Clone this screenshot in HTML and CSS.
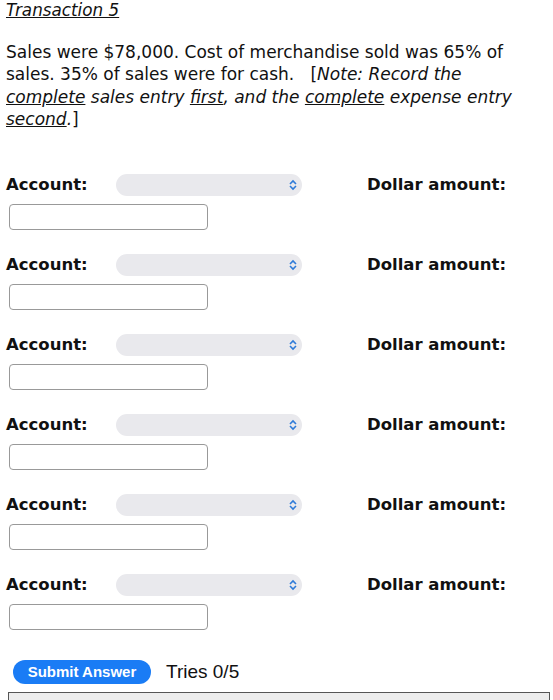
FILE: index.html
```html
<!DOCTYPE html>
<html lang="en">
<head>
    <meta charset="UTF-8">
    <meta name="viewport" content="width=device-width, initial-scale=1.0">
    <title>Transaction 5</title>
    <link rel="stylesheet" href="styles.css">
</head>
<body>
    <div class="question">
        <div class="title">Transaction 5</div>
        <p class="prompt">
            Sales were $78,000. Cost of merchandise sold was 65% of sales. 35% of sales were for cash. &nbsp;&nbsp;[<i>Note: Record the <u>complete</u> sales entry <u>first</u>, and the <u>complete</u> expense entry <u>second</u>.</i>]
        </p>

        <div class="entries">
            <div class="entry">
                <div class="line">
                    <span class="label">Account:</span>
                    <div class="select"><svg class="arrow" viewBox="0 0 10 12" width="10" height="12"><path d="M2 5 L5 2 L8 5 M2 7 L5 10 L8 7" fill="none" stroke="#2f7bd8" stroke-width="1.6"/></svg></div>
                    <span class="label dollar">Dollar amount:</span>
                </div>
                <input class="amount" type="text">
            </div>
            <div class="entry">
                <div class="line">
                    <span class="label">Account:</span>
                    <div class="select"><svg class="arrow" viewBox="0 0 10 12" width="10" height="12"><path d="M2 5 L5 2 L8 5 M2 7 L5 10 L8 7" fill="none" stroke="#2f7bd8" stroke-width="1.6"/></svg></div>
                    <span class="label dollar">Dollar amount:</span>
                </div>
                <input class="amount" type="text">
            </div>
            <div class="entry">
                <div class="line">
                    <span class="label">Account:</span>
                    <div class="select"><svg class="arrow" viewBox="0 0 10 12" width="10" height="12"><path d="M2 5 L5 2 L8 5 M2 7 L5 10 L8 7" fill="none" stroke="#2f7bd8" stroke-width="1.6"/></svg></div>
                    <span class="label dollar">Dollar amount:</span>
                </div>
                <input class="amount" type="text">
            </div>
            <div class="entry">
                <div class="line">
                    <span class="label">Account:</span>
                    <div class="select"><svg class="arrow" viewBox="0 0 10 12" width="10" height="12"><path d="M2 5 L5 2 L8 5 M2 7 L5 10 L8 7" fill="none" stroke="#2f7bd8" stroke-width="1.6"/></svg></div>
                    <span class="label dollar">Dollar amount:</span>
                </div>
                <input class="amount" type="text">
            </div>
            <div class="entry">
                <div class="line">
                    <span class="label">Account:</span>
                    <div class="select"><svg class="arrow" viewBox="0 0 10 12" width="10" height="12"><path d="M2 5 L5 2 L8 5 M2 7 L5 10 L8 7" fill="none" stroke="#2f7bd8" stroke-width="1.6"/></svg></div>
                    <span class="label dollar">Dollar amount:</span>
                </div>
                <input class="amount" type="text">
            </div>
            <div class="entry">
                <div class="line">
                    <span class="label">Account:</span>
                    <div class="select"><svg class="arrow" viewBox="0 0 10 12" width="10" height="12"><path d="M2 5 L5 2 L8 5 M2 7 L5 10 L8 7" fill="none" stroke="#2f7bd8" stroke-width="1.6"/></svg></div>
                    <span class="label dollar">Dollar amount:</span>
                </div>
                <input class="amount" type="text">
            </div>
        </div>

        <div class="actions">
            <button class="submit">Submit Answer</button>
            <span class="tries">Tries 0/5</span>
        </div>
        <div class="feedback"></div>
    </div>
</body>
</html>
```

FILE: styles.css
```css
body {
    margin: 0;
    background-color: #fff;
    color: #111;
    font-family: "DejaVu Sans", Verdana, sans-serif;
    font-size: 16.5px;
}

.question {
    padding: 0 3px 0 6px;
}

.title {
    font-style: italic;
    text-decoration: underline;
    font-size: 16.8px;
    line-height: 20px;
}

.prompt {
    margin: 21px 0 0 0;
    max-width: 512px;
    font-size: 17px;
    line-height: 22.4px;
}

.entries {
    margin-top: 43px;
    display: flex;
    flex-direction: column;
    gap: 24px;
}

.entry {
    display: flex;
    flex-direction: column;
    gap: 8px;
}

.line {
    display: flex;
    align-items: center;
    height: 22px;
}

.label {
    font-weight: bold;
    width: 110px;
}

.select {
    width: 186px;
    height: 22px;
    border-radius: 11px;
    background-color: #e9e9ed;
    display: flex;
    align-items: center;
    justify-content: flex-end;
    padding-right: 4px;
    box-sizing: border-box;
}

.dollar {
    width: auto;
    margin-left: 65px;
}

.amount {
    width: 199px;
    height: 26px;
    box-sizing: border-box;
    margin: 0 0 0 3px;
    border: 1px solid #999;
    border-radius: 4px;
    background: #fff;
    font-size: 16px;
}

.actions {
    margin-top: 30px;
    display: flex;
    align-items: center;
    gap: 15px;
    padding-left: 7px;
}

.submit {
    width: 138px;
    height: 24px;
    border: none;
    border-radius: 12px;
    background-color: #1a7cf5;
    color: #fff;
    font-family: "Liberation Sans", Arial, sans-serif;
    font-weight: bold;
    font-size: 15px;
    padding: 0;
}

.tries {
    font-family: "Liberation Sans", Arial, sans-serif;
    font-size: 19px;
}

.feedback {
    margin: 8px 0 0 2px;
    height: 40px;
    border: 1px solid #555;
    background-color: #ececec;
}
```
